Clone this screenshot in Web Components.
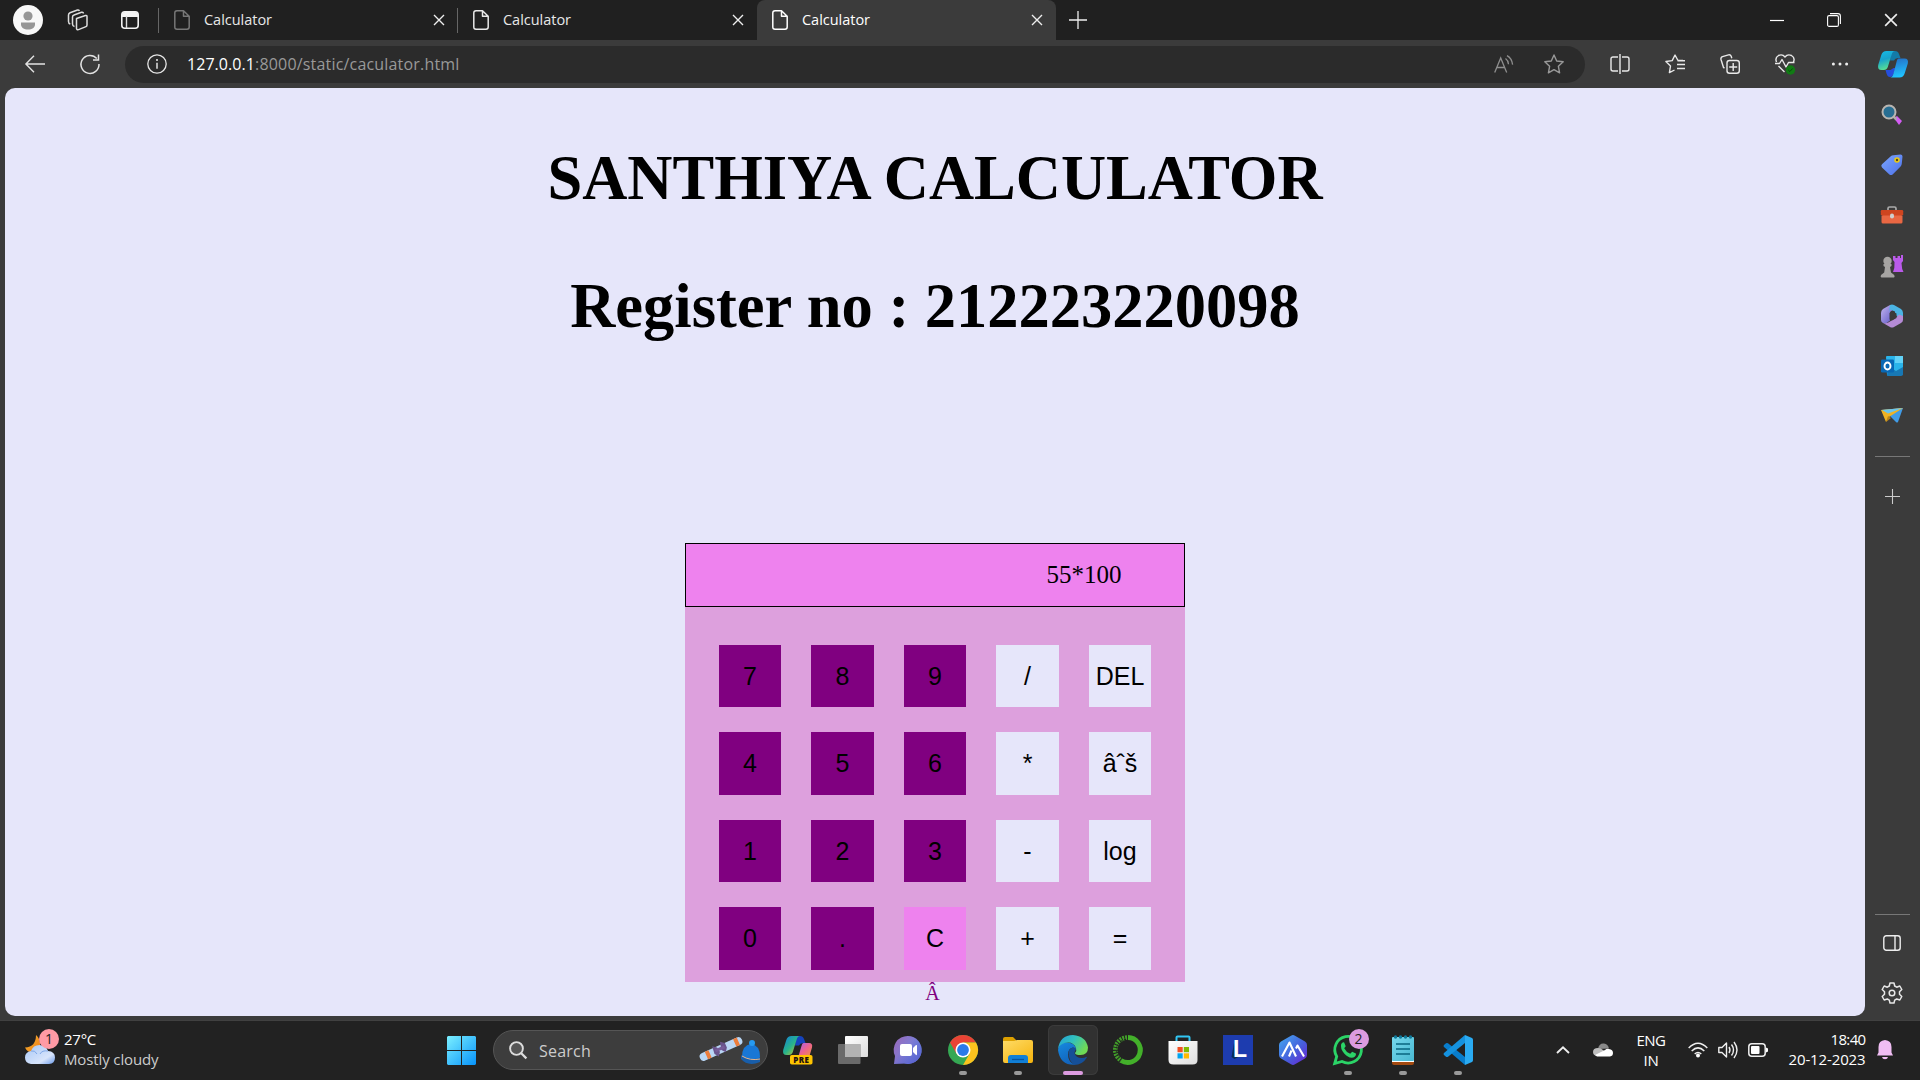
<!DOCTYPE html>
<html lang="en">
<head>
<meta charset="utf-8">
<title>Calculator</title>
<style>
html,body{margin:0;padding:0;width:1920px;height:1080px;overflow:hidden;background:#222}
body{font-family:"Open Sans","Noto Sans",sans-serif;color:#fff}
</style>
</head>
<body>
<desktop-screen></desktop-screen>
<script>
const ICONS = {
avatar:['0 0 30 30','<circle cx="15" cy="15" r="15" fill="#f8f8f8"/><circle cx="15" cy="11" r="4.6" fill="#969696"/><path d="M8 17.5h14v2c0 3-3 5-7 5s-7-2-7-5z" fill="#969696"/>'],
workspaces:['0 0 22 22','<g fill="none" stroke="#ddd" stroke-width="1.5" stroke-linejoin="round"><path d="M9.5 9.5l9-3q1.500-.3 1.500 1v8.500q0 1.200-1 1.600l-7.500 3q-1.800.5-2-1.200z"/><path d="M16.500 4.500q-.5-1.700-2-1.200L7 6q-1.500.5-1.500 2v7q0 2 2 2.500"/><path d="M12.500 1.800q-.8-1.200-2-.8L3 3.800Q1.500 4.500 1.500 6v6.500q0 2 1.800 2.500"/></g>'],
tabmenu:['0 0 18 18','<rect x=".8" y=".8" width="16.400" height="16.400" rx="3" fill="none" stroke="#f4f4f4" stroke-width="1.600"/><path d="M1 4Q1 1 4 1h10q3 0 3 3v2H1z" fill="#f4f4f4"/><path d="M5.500 5v12" stroke="#ddd" stroke-width="1.400"/>'],
file:['0 0 16 20','<path d="M3 .8h6.500l5.700 5.500V17q0 2.200-2.200 2.200H3Q.8 19.200.8 17V3Q.8.8 3 .8zM9.500 1v5.300h5.500" fill="none" stroke="currentColor" stroke-width="1.500" stroke-linejoin="round"/>'],
x:['0 0 12 12','<path d="M1 1l10 10M11 1L1 11" stroke="#eee" stroke-width="1.400"/>'],
plus:['0 0 18 18','<path d="M9 0v18M0 9h18" stroke="currentColor" stroke-width="1.300"/>'],
min:['0 0 14 14','<path d="M0 7.500h14" stroke="#fff" stroke-width="1.200"/>'],
max:['0 0 14 14','<g fill="none" stroke="#fff" stroke-width="1.100"><rect x=".6" y="2.600" width="10.800" height="10.800" rx="1.500"/><path d="M3 .6h8q2.400 0 2.400 2.400v8"/></g>'],
back:['0 0 20 18','<path d="M20 9H1M9 .8L.9 9 9 17.200" fill="none" stroke="#e3e3e3" stroke-width="1.400"/>'],
reload:['0 0 20 20','<path d="M16.800 4.500A9 9 0 1 0 19 10M18.500.5v5.500H13" fill="none" stroke="#e3e3e3" stroke-width="1.500"/>'],
info:['0 0 20 20','<circle cx="10" cy="10" r="9.200" fill="none" stroke="#e6e6e6" stroke-width="1.300"/><path d="M10 8.700v6" stroke="#eee" stroke-width="1.400"/><circle cx="10" cy="6" r="1" fill="#eee"/>'],
read:['0 0 20 18','<g fill="none" stroke="#8e8e8e" stroke-width="1.300"><path d="M.7 17.500L6.700 3l6 14.500M2.700 12.500h8M11.500 3.500q2.800 2 3 5.700M13 .7q4.800 2.500 5.600 9"/></g>'],
star:['0 0 20 20','<path d="M10 1l2.700 6 6.500.8-4.800 4.500 1.200 6.500L10 15.600l-5.600 3.200 1.200-6.500L.8 7.800 7.300 7z" fill="none" stroke="#999" stroke-width="1.400" stroke-linejoin="round"/>'],
split:['0 0 20 20','<g fill="none" stroke="#e8e8e8" stroke-width="1.400"><path d="M8 3H3Q1 3 1 5v10q0 2 2 2h5M12 3h5q2 0 2 2v10q0 2-2 2h-5M10 0v20"/></g>'],
favs:['0 0 20 20','<g fill="none" stroke="#e8e8e8" stroke-width="1.400" stroke-linejoin="round"><path d="M18 6.500h-5L10 1 7.200 6.600.9 7.500l4.600 4.500-1.100 6.600L9.500 16M12.500 6.700H20M12 10.500h8M12 14.500h8"/></g>'],
collect:['0 0 20 20','<g fill="none" stroke="#e8e8e8" stroke-width="1.400"><rect x="7" y="6.500" width="12.300" height="12.700" rx="2.500"/><path d="M13.200 9v8M9.200 13h8M4.500 14L3.500 13.500 1 5.500q-.5-2 1.500-2.800L8.500.9q2-.4 2.700 1.400l.6 2"/></g>'],
heart:['0 0 20 20','<g fill="none" stroke="#e8e8e8" stroke-width="1.400" stroke-linejoin="round"><path d="M1.500 8Q-.3 3.500 3.500 1.500 7.500-.2 10 3q2.500-3.200 6.500-1.500Q20.300 3.500 18.500 8M0 9.500h4.500L7 5.500l4 7.500 2.500-4.500h6M3.500 12l6 6"/></g><circle cx="15.500" cy="16" r="4.700" fill="#117b14"/><path d="M13.300 16l1.600 1.500 2.700-3" stroke="#064d08" fill="none"/>'],
dots:['0 0 18 4','<g fill="#eee"><circle cx="2.400" cy="2" r="1.500"/><circle cx="9" cy="2" r="1.500"/><circle cx="15.600" cy="2" r="1.500"/></g>'],
copilot:['0 0 30 27','<defs><linearGradient id="a" x2=".3" y2="1"><stop stop-color="#16bde8"/><stop offset=".5" stop-color="#18a3cc"/><stop offset="1" stop-color="#58df93"/></linearGradient><linearGradient id="b" x2=".2" y2="1"><stop stop-color="#246cc5"/><stop offset="1" stop-color="#20c2ff"/></linearGradient></defs><path d="M13 0h4q3 0 4 3l1.500 4H20q-3 0-4 2.500h-4z" fill="#137ba8"/><path d="M7.500 19h5l3-2 2 0-2 6q-1 3-3.500 3-2.500 0-3.500-3.500z" fill="#254edd"/><path d="M8.500 0H17q-2.500 0-3.500 4l-3.700 12q-1 3-4 3H3.500Q-.8 19 .2 14L3.300 4q1.200-4 5.200-4z" fill="url(#a)"/><path d="M20.500 7.500h6q4.300 0 3.300 5l-3 9.500q-1.300 4.500-5.300 4.500H12q2.500 0 3.500-4L18.500 11q.7-3.500 2-3.500z" fill="url(#b)"/>'],
sSearch:['0 0 22 22','<path d="M13 14l3-2 5 5-3 4z" fill="#d35cf3"/><path d="M12.500 12.500l3 3" stroke="#aaa" stroke-width="2.500"/><circle cx="8" cy="8" r="6.500" fill="#286e92" stroke="#b9b5b1" stroke-width="2"/>'],
sTag:['0 0 22 22','<defs><linearGradient id="t" x2="1" y2="1"><stop stop-color="#7ca7ff"/><stop offset="1" stop-color="#4d70e8"/></linearGradient></defs><path d="M12.500 1.200l7-.6q2 0 2 2l-.7 7q0 1.500-1.200 2.800l-8 8q-1.600 1.400-3.200 0L1 13.500q-1.500-1.600 0-3.200L9.500 2.400q1.200-1.100 3-1.200z" fill="url(#t)"/><circle cx="16" cy="6" r="2" fill="#594a17" stroke="#eac915" stroke-width="1.600"/>'],
sTools:['0 0 24 20','<path d="M8 5.500V3.500Q8 2 9.500 2h5Q16 2 16 3.500v2" fill="none" stroke="#aaa" stroke-width="1.700"/><rect x="1.500" y="10" width="21" height="8.500" rx="1.500" fill="#e96743"/><rect x=".8" y="5" width="22.400" height="5.500" rx="1.200" fill="#cf4520"/><rect x="10" y="8.500" width="4" height="5" rx="2" fill="#cfcfcf"/>'],
sChess:['0 0 24 24','<path d="M13 2h2.500v2h2V2H20v2h1V1h2v6l-1.500 2 .7 6 1.300 3H13l1.300-4 .2-6L13 6z" fill="#ba5bea"/><g fill="#a6a4a2"><circle cx="7.500" cy="7" r="4.200"/><path d="M3.500 10h8v2l-1.500 1 1 5.500 3.200 2.500q1 2-.2 2.500H1.500q-1.500-.5-.5-2.500L4.200 18.500 5 13l-1.500-1z"/></g>'],
s365:['0 0 22 24','<defs><linearGradient id="m" y2="1"><stop stop-color="#c4b6ef"/><stop offset="1" stop-color="#5b54c5"/></linearGradient></defs><path d="M9 1L2 5Q0 6.500 0 9v7q0 2 2 3l3 .5 4-3V8l4-3z" fill="url(#m)"/><path d="M9 1q2-1 4 0l7 4q2 1.500 2 4v6l-8-4V7.500L9 5.500 8 8z" fill="#4bb4e4"/><path d="M22 12v4q0 2-2 3l-7 4q-2 1-4 0l-7-4q4 1 7-1.500l5-3 4-4z" fill="#b58bd6"/><path d="M8.500 9L11 7l4.500 2.500v4.500L11 16.500 8.500 15.500z" fill="#3b3b3b"/>'],
sOutlook:['0 0 22 22','<path d="M5 2q0-1 1-1h15l1 1v17l-1 1H6z" fill="#2ab4ea"/><path d="M14 1h8v7h-8z" fill="#62d2f7"/><path d="M7 11l8 5 7-4v7q0 2-2 2H6z" fill="#1778b5"/><rect y="4.500" width="13" height="13" rx="1.200" fill="#0868b5"/><ellipse cx="6.500" cy="11" rx="3" ry="3.500" fill="none" stroke="#fff" stroke-width="1.900"/>'],
sSend:['0 0 22 18','<path d="M0 3L22 1l-5 14q-1 1-2 0L9 9z" fill="#419ce7"/><path d="M0 3L22 1 8 10 5 15z" fill="#f0b323"/><path d="M1 3L22 1 7 6.500z" fill="#69c5ee"/><path d="M5 15l2-6 3 2z" fill="#ba8419"/>'],
panel:['0 0 18 16','<g fill="none" stroke="#eee" stroke-width="1.400"><rect x=".8" y=".8" width="16.400" height="14.400" rx="2.500"/><path d="M12 1v14"/></g>'],
gear:['0 0 22 22','<g fill="none" stroke="#e8e8e8" stroke-width="1.500" stroke-linejoin="round"><path d="M9 1h4l.7 3 2 1.200L18.800 4l2 3.500-2.300 2.200v2.600l2.300 2.200-2 3.500-3.100-1-2 1.100L13 21H9l-.7-2.900-2-1.100-3.100 1-2-3.500 2.300-2.200V9.700L1.200 7.500l2-3.500 3.100 1.200 2-1.200z"/><circle cx="11" cy="11" r="2.800"/></g>'],
weather:['0 0 30 30','<defs><linearGradient id="w" y2="1"><stop stop-color="#a8c8f7"/><stop offset=".7" stop-color="#d7e4fb"/><stop offset="1" stop-color="#6a99e8"/></linearGradient><linearGradient id="q" y2="1"><stop stop-color="#f5b52c"/><stop offset="1" stop-color="#ed7c1b"/></linearGradient></defs><path d="M11 0q5 4 4 12L8 18Q2 17 0 12.500 11 12 11 0z" fill="url(#q)"/><path d="M6 29Q0 28 0 22.500 0 17 6 16q2-6 8.500-6T23 16q7 .5 7 6.500T24 29z" fill="url(#w)"/><path d="M6 16q4-1 6 3M23 16q-6-1-8 3" stroke="#7fa8e8" fill="none"/>'],
win:['0 0 29 29','<defs><linearGradient id="s" gradientUnits="userSpaceOnUse" x2="29" y2="29"><stop stop-color="#7cf0ff"/><stop offset="1" stop-color="#0793fb"/></linearGradient></defs><path d="M1 0h13v14H0V1zM15 0h13l1 1v13H15zM0 15h14v14H1l-1-1zM15 15h14v13l-1 1H15z" fill="url(#s)"/>'],
mag:['0 0 18 18','<circle cx="7.500" cy="7.500" r="6.400" fill="#555" stroke="#ddd" stroke-width="1.900"/><path d="M12 12l5.400 5.400" stroke="#ddd" stroke-width="2.200"/>'],
ski:['0 0 62 30','<g transform="rotate(-24 22 14)"><rect x="-1" y="10" width="46" height="8" rx="4" fill="#b9d6f5"/><path d="M6 10h4v8H6zM37 10h4v8h-4z" fill="#ec7d3c"/><path d="M15 8l4 3 1 5-3 4-3-4zM24 7l4 3v5l-3 4-3-4z" fill="#69548c"/><path d="M16 12h10v3H16z" fill="#765c99"/></g><path d="M43 22q0-12 9-13 9 1 9 13l-2 4q-7 3-13-1z" fill="#1977d5"/><circle cx="53" cy="8" r="3" fill="#269af1"/><path d="M42 20q8 6 19 3v4q-12 5-19-3z" fill="#185eaa"/><path d="M43 21q8 5 18 3" stroke="#e9b68a" fill="none"/>'],
pre:['0 0 30 30','<defs><linearGradient id="p" y2="1"><stop stop-color="#127ddd"/><stop offset=".5" stop-color="#28b48a"/><stop offset="1" stop-color="#f2c51a"/></linearGradient><linearGradient id="r" y2="1"><stop stop-color="#a560ee"/><stop offset=".5" stop-color="#ed638d"/><stop offset="1" stop-color="#f09443"/></linearGradient></defs><path d="M13 1h4q3 0 4 3l1.500 4H20q-3 0-4 2.500h-4z" fill="#1543bd"/><path d="M8.500 1H17q-2.500 0-3.500 4l-3.700 12q-1 3-4 3H3.500Q-.8 20 .2 15L3.300 5q1.200-4 5.200-4z" fill="url(#p)"/><path d="M20.500 8h5.500q4 0 3 4.500L26.500 21H15.500L18.500 11q.7-3 2-3z" fill="url(#r)"/><rect x="7" y="20" width="22.500" height="9.500" rx="1.800" fill="#ffc400"/><text x="18.200" y="27.800" font-family="Open Sans" font-weight="800" font-size="8" text-anchor="middle" letter-spacing=".3" fill="#211">PRE</text>'],
task:['0 0 30 30','<defs><linearGradient id="g" x2="1" y2="1"><stop stop-color="#fff"/><stop offset="1" stop-color="#ddd"/></linearGradient></defs><rect x="7" y="1" width="23" height="21" rx="1" fill="url(#g)"/><rect y="9" width="22.500" height="20" rx="1" fill="#777" opacity=".85"/><rect x="7" y="9" width="15.500" height="13" fill="#b3b3b3"/>'],
chat:['0 0 30 30','<defs><linearGradient id="c" x2="1" y2=".6"><stop stop-color="#9b67b8"/><stop offset="1" stop-color="#6b8ce7"/></linearGradient><linearGradient id="d" y2="1"><stop offset=".4" stop-color="#5657c9" stop-opacity="0"/><stop offset="1" stop-color="#5657c9"/></linearGradient></defs><path d="M15 1a14 14 0 1 1-4 27.500L1 29l1-8A14 14 0 0 1 15 1z" fill="url(#c)"/><path d="M15 1a14 14 0 1 1-4 27.500L1 29l1-8A14 14 0 0 1 15 1z" fill="url(#d)"/><rect x="7" y="9" width="12" height="12" rx="2" fill="#fff"/><path d="M20 13l3-3q1-.5 1 1v8q0 1.500-1 1l-3-3z" fill="#fff"/>'],
chrome:['0 0 30 30','<circle cx="15" cy="15" r="15" fill="#35a853"/><path d="M2 7.500A15 15 0 0 1 28 7.500H15L8.500 18.800z" fill="#e94335"/><path d="M28 7.500A15 15 0 0 1 15 30l6.500-11.200L15 7.500z" fill="#fcc31e"/><circle cx="15" cy="15" r="7.500" fill="#fff"/><circle cx="15" cy="15" r="5.900" fill="#2a7ae9"/>'],
folder:['0 0 30 30','<defs><linearGradient id="f" x2=".8" y2="1"><stop stop-color="#ffdc67"/><stop offset="1" stop-color="#f6b613"/></linearGradient></defs><path d="M0 4q0-2 2-2h8l3 3v6H0z" fill="#dda000"/><path d="M0 6h11l3-1h14q2 0 2 2v19q0 2-2 2H2q-2 0-2-2z" fill="url(#f)"/><path d="M5 28v-5q0-3 3-3h14q3 0 3 3v5z" fill="#117fd6"/><path d="M9 24.500h12" stroke="#0754a0" stroke-width="1.300"/>'],
edge:['0 0 30 30','<defs><linearGradient id="e" x2="1" y2=".5"><stop stop-color="#229ed8"/><stop offset=".5" stop-color="#31c0bd"/><stop offset="1" stop-color="#70db55"/></linearGradient><linearGradient id="h" x2=".4" y2="1"><stop stop-color="#1689df"/><stop offset="1" stop-color="#1264bd"/></linearGradient></defs><path d="M0 15Q1 7 9.500 7.500q8 .5 8.500 7-1-2-3-2-5 1-5 7 0 7.500 7 10.300Q2 30.500 0 15z" fill="url(#h)"/><path d="M10.500 18q0-4.500 4.500-5.500 2 0 3 2-1.500 1.500-1.500 3.500 1 5 7.500 5 2.500 0 4.500-1.200.6 0 .2 1Q24.500 30 16 30 10.500 25 10.500 18z" fill="#154f98"/><path d="M0 14Q2 0 15 0q13 1 15 12.500Q30 20 22.500 20q-5.500 0-5.500-2 2-2 1-5Q16 7.500 10 7.500 2 8 0 14z" fill="url(#e)"/>'],
anaconda:['0 0 30 30','<path d="M15 2.500a12.500 12.500 0 1 1-7 23" fill="none" stroke="#43b02a" stroke-width="5"/><path d="M14 2.500A12.500 12.500 0 0 0 8 25.500" fill="none" stroke="#43a02a" stroke-width="4.500" stroke-dasharray="1.800 1"/><path d="M13 4.500A10.500 10.500 0 0 0 6 22" fill="none" stroke="#222" stroke-width="1" stroke-dasharray="2 2"/>'],
store:['0 0 30 30','<defs><linearGradient id="z" y2="1"><stop stop-color="#fff"/><stop offset="1" stop-color="#dedede"/></linearGradient></defs><path d="M8.500 7V2.500q0-1 1-1h11q1 0 1 1V7" fill="none" stroke="#31c6f3" stroke-width="2"/><path d="M.5 6h29v19q0 4.500-5 4.500h-19q-5 0-5-4.500z" fill="url(#z)"/><path d="M9.500 12h5.200v5.200H9.500z" fill="#f25022"/><path d="M15.800 12H21v5.200h-5.200z" fill="#7fba00"/><path d="M9.500 18.300h5.200v5.200H9.500z" fill="#00a4ef"/><path d="M15.800 18.300H21v5.200h-5.200z" fill="#ffb900"/>'],
lapp:['0 0 30 30','<rect width="30" height="30" fill="#1d3caf"/><path d="M11 8L8.500 22l3 2 4-2z" fill="#092f56"/><text x="10" y="22" font-family="Liberation Sans" font-weight="700" font-size="23" fill="#fff">L</text>'],
hex:['0 0 30 30','<defs><linearGradient id="x" x2="1" y2="1"><stop stop-color="#44abf1"/><stop offset=".55" stop-color="#4660dc"/><stop offset="1" stop-color="#6b20d2"/></linearGradient></defs><path d="M13 .7q2-1.200 4 0l10 5.800q2 1.200 2 3.500v10q0 2.300-2 3.500l-10 5.800q-2 1.200-4 0L3 23.500Q1 22.300 1 20V10q0-2.300 2-3.500z" fill="url(#x)"/><path d="M4 21.500l7.500-14 6.500 14M11 21.500l2.500-6M18 13.500l1.500-3L26 21.500" fill="none" stroke="#fff" stroke-width="2.100" stroke-linejoin="round"/>'],
whats:['0 0 30 30','<path d="M1.700 28.500l2-7A13.300 13.300 0 1 1 9 26.500z" fill="#202522" stroke="#2bd467" stroke-width="2.800"/><path d="M8.200 9q1.500-2.500 3-1.500l1.500 3.700-1.500 2q2 4 6 5.500l2-2 3.700 1.800q.5 2.500-2.500 4-5 1-9.200-4Q7 13.500 8.200 9z" fill="#2bd467"/>'],
note:['0 0 22 30','<defs><linearGradient id="n" y2="1"><stop stop-color="#76d8ed"/><stop offset="1" stop-color="#49b8d1"/></linearGradient></defs><path d="M0 25h22v3q0 2-2 2H2q-2 0-2-2z" fill="#a34a10"/><path d="M0 25h22v2H0z" fill="#fff"/><rect y="2" width="22" height="24" rx="1" fill="url(#n)"/><g stroke="#086580" stroke-width="1.700"><path d="M4 9h14M4 14h14M4 19h14"/></g><g fill="#10799a"><circle cx="3.500" cy="2" r="1.700"/><circle cx="8.500" cy="2" r="1.700"/><circle cx="13.500" cy="2" r="1.700"/><circle cx="18.500" cy="2" r="1.700"/></g>'],
code:['0 0 30 30','<path d="M22 0l7 3q1 .5 1 2v20q0 1.500-1 2l-7 3z" fill="#2aabf2"/><path d="M22 30L1 12q-1-1 0-2l2-1.700q1-.8 2 0L22 22z" fill="#087dcc"/><path d="M22 0L1 18q-1 1 0 2l2 1.700q1 .8 2 0L22 8z" fill="#1592df"/>'],
chev:['0 0 14 8','<path d="M1 7l6-5.700L13 7" fill="none" stroke="#eee" stroke-width="1.900"/>'],
cloud:['0 0 20 14','<path d="M5 6q1-6 6-5.500 4 .5 5 5z" fill="#898989"/><path d="M4 13q-4-.5-4-4 0-4 5-4 3 0 5 2l7 6z" fill="#bebebe"/><path d="M2 12l10-5q2-2 4-1 4 .7 4 4 0 3-3 3.500H4z" fill="#fff"/>'],
wifi:['0 0 20 16','<g fill="none" stroke="#eee" stroke-width="1.500"><path d="M.7 6q9.300-9.500 18.600 0M3.700 9q6.300-6.200 12.600 0M6.700 12q3.300-3 6.600 0"/></g><circle cx="10" cy="13.500" r="2" fill="#fff"/>'],
sound:['0 0 20 18','<g fill="none" stroke="#eee" stroke-width="1.400" stroke-linejoin="round"><path d="M.8 6.500H4L8.500 2v14L4 11.500H.8zM11 6q2 3 0 6M13.500 3.500q4 5.500 0 11M16 1q6 8 0 16"/></g>'],
batt:['0 0 20 14','<rect x=".8" y=".8" width="16.400" height="12.400" rx="3" fill="none" stroke="#eee" stroke-width="1.500"/><rect x="3" y="3" width="8.500" height="8" rx="1" fill="#fff"/><path d="M18 4.500l2 1v3l-2 1z" fill="#fff"/>'],
bell:['0 0 16 20','<path d="M0 15.500l1.500-3V7q0-6.500 6.500-7 6.500.5 6.500 7v5.500l1.500 3z" fill="#f0bdf3"/><path d="M5 17h6q-.5 2.300-3 2.300T5 17z" fill="#f0bdf3"/>']
};

customElements.define('ui-icon', class extends HTMLElement{
  connectedCallback(){
    if(this.shadowRoot) return;
    const [box,body]=ICONS[this.getAttribute('name')];
    const [, , bw, bh]=box.split(' ');
    const w=this.getAttribute('w')||bw, h=this.getAttribute('h')||bh;
    this.attachShadow({mode:'open'}).innerHTML=
      `<style>:host{display:block;flex:none;width:${w}px;height:${h}px}svg{display:block;overflow:visible}</style><svg width="${w}" height="${h}" viewBox="${box}">${body}</svg>`;
  }
});

/* A single-line label whose tracking is adjusted to fill a given width. */
customElements.define('ui-label', class extends HTMLElement{
  connectedCallback(){
    if(this.shadowRoot) return;
    this.attachShadow({mode:'open'}).innerHTML='<style>:host{display:inline-block;white-space:pre;flex:none}</style><slot></slot>';
    const w=+this.getAttribute('w');
    if(w){
      const s=(w-this.getBoundingClientRect().width)/this.textContent.length;
      this.style.letterSpacing=s.toFixed(3)+'px';
    }
  }
});

function define(name, css, html){
  const t=document.createElement('template');
  t.innerHTML=`<style>${css}</style>${html}`;
  customElements.define(name, class extends HTMLElement{
    connectedCallback(){
      if(this.shadowRoot) return;
      this.attachShadow({mode:'open'}).appendChild(t.content.cloneNode(true));
    }
  });
}

define('browser-tab', `
:host{display:flex;align-items:center;box-sizing:border-box;width:299px;height:40px;padding:0 13px 0 15px;font-size:14.5px;position:relative;color:#e8e8e8}
:host([dim]) ui-icon.f{color:#777}
:host([rule])::before{content:"";position:absolute;left:-1px;top:8px;width:1px;height:25px;background:#666}
:host([active]){background:#3b3b3b;border-radius:8px 8px 0 0;color:#fff}
.t{flex:1;margin-left:14px;line-height:40px}`,
`<ui-icon class="f" name="file"></ui-icon><div class="t"><slot></slot></div><ui-icon name="x"></ui-icon>`);

define('tab-strip', `
:host{display:flex;align-items:center;height:40px;background:#202020}
.a{margin-left:13px}.b{margin-left:23.500px}.c{margin-left:32px}.tabs{display:flex;margin-left:20.500px}
.p{margin-left:13px;color:#eee}.ctl{display:flex;gap:43px;margin-left:auto;margin-right:22px}`,
`<ui-icon class="a" name="avatar"></ui-icon><ui-icon class="b" name="workspaces"></ui-icon><ui-icon class="c" name="tabmenu"></ui-icon>
<div class="tabs"><browser-tab dim rule><ui-label w="68">Calculator</ui-label></browser-tab><browser-tab rule><ui-label w="68">Calculator</ui-label></browser-tab><browser-tab active><ui-label w="68">Calculator</ui-label></browser-tab></div>
<ui-icon class="p" name="plus"></ui-icon>
<div class="ctl"><ui-icon name="min"></ui-icon><ui-icon name="max"></ui-icon><ui-icon name="x" w="14" h="14"></ui-icon></div>`);

define('address-bar', `
:host{display:flex;align-items:center;box-sizing:border-box;width:1460px;height:37px;border-radius:19px;background:#2b2b2b;padding:0 21px 0 22px;font-size:16px}
.u{margin-left:20px;flex:1;color:#999;display:flex;line-height:37px}.h{color:#fff}.s{margin-left:30px}`,
`<ui-icon name="info"></ui-icon><div class="u"><ui-label class="h" w="68">127.0.0.1</ui-label><ui-label w="204.500">:8000/static/caculator.html</ui-label></div><ui-icon name="read"></ui-icon><ui-icon class="s" name="star"></ui-icon>`);

define('tool-bar', `
:host{display:flex;align-items:center;height:48px;background:#3b3b3b;box-sizing:border-box}
.b{margin-left:25px}.r{margin-left:35px}address-bar{margin-left:25px}.g{display:flex;gap:35px;margin-left:24.500px}
.d{margin-left:36px}.c{margin-left:29.500px}`,
`<ui-icon class="b" name="back"></ui-icon><ui-icon class="r" name="reload"></ui-icon><address-bar></address-bar>
<div class="g"><ui-icon name="split"></ui-icon><ui-icon name="favs"></ui-icon><ui-icon name="collect"></ui-icon><ui-icon name="heart"></ui-icon></div>
<ui-icon class="d" name="dots"></ui-icon><ui-icon class="c" name="copilot"></ui-icon>`);

define('calc-key', `
:host{display:flex;align-items:center;justify-content:center;box-sizing:border-box;padding-top:.8px;background:#e6e6fa;color:#000;font:25px/29px "Liberation Sans",sans-serif;white-space:pre}
:host([num]){background:#800080}:host([clear]){background:#ee82ee}`, `<slot></slot>`);

define('calc-pad', `
:host{display:block;width:500px;height:439px;background:#dda0dd;color:#000}
.d{box-sizing:border-box;height:64px;border:1px solid #000;background:#ee82ee;font:25px/61px "Liberation Serif",serif;text-align:right;padding-right:62.500px}
.k{display:grid;grid-template:repeat(4,62.500px)/repeat(5,62.500px);column-gap:30px;row-gap:25px;padding:37.500px 0 0 33.750px}`,
`<div class="d">55*100</div><div class="k">
<calc-key num>7</calc-key><calc-key num>8</calc-key><calc-key num>9</calc-key><calc-key>/</calc-key><calc-key>DEL</calc-key>
<calc-key num>4</calc-key><calc-key num>5</calc-key><calc-key num>6</calc-key><calc-key>*</calc-key><calc-key>âˆš</calc-key>
<calc-key num>1</calc-key><calc-key num>2</calc-key><calc-key num>3</calc-key><calc-key>-</calc-key><calc-key>log</calc-key>
<calc-key num>0</calc-key><calc-key num>.</calc-key><calc-key clear>C</calc-key><calc-key>+</calc-key><calc-key>=</calc-key></div>`);

define('web-page', `
:host{display:flex;flex-direction:column;align-items:center;box-sizing:border-box;width:1860px;height:928px;border-radius:10px;background:#e6e6fa;color:#000;padding-top:26px;overflow:hidden;font-family:"Liberation Serif",serif}
h1{margin:0;font-size:62.500px;line-height:128px;white-space:pre}
calc-pad{margin-top:173px}.a{color:#800080;font-size:20px;line-height:23px;padding-right:5px}`,
`<h1>SANTHIYA CALCULATOR</h1><h1>Register no : 212223220098</h1><calc-pad></calc-pad><div class="a">Â</div>`);

define('side-bar', `
:host{display:flex;flex-direction:column;align-items:center;box-sizing:border-box;width:54px;height:932px;padding-top:2px}
.i{height:50.200px;display:flex;align-items:center}
hr{width:35px;height:1px;border:0;background:#777;margin:0}
.p{color:#ccc;margin-top:31.500px}.e{margin-top:auto}.n{margin-top:19.500px}.g{margin:31.500px 0 16px}`,
`<div class="i"><ui-icon name="sSearch"></ui-icon></div><div class="i"><ui-icon name="sTag"></ui-icon></div><div class="i"><ui-icon name="sTools"></ui-icon></div><div class="i"><ui-icon name="sChess"></ui-icon></div><div class="i"><ui-icon name="s365"></ui-icon></div><div class="i"><ui-icon name="sOutlook"></ui-icon></div><div class="i"><ui-icon name="sSend"></ui-icon></div>
<hr style="margin-top:15px"><ui-icon class="p" name="plus" w="15" h="15"></ui-icon>
<hr class="e"><ui-icon class="n" name="panel"></ui-icon><ui-icon class="g" name="gear"></ui-icon>`);

define('task-app', `
:host{display:flex;align-items:center;justify-content:center;position:relative;width:55px;height:50px}
:host([active])::before{content:"";position:absolute;inset:0 2.500px;border-radius:6px;background:#313131;box-shadow:inset 0 0 0 1px #3b3b3b}
:host([run])::after{content:"";position:absolute;bottom:0;left:23.500px;width:8px;height:4px;border-radius:2px;background:#999}
:host([active])::after{left:17.500px;width:20px;background:#dc9be0}
::slotted(ui-icon){position:relative}`, `<slot></slot>`);

define('count-badge', `
:host{position:absolute;width:20px;height:20px;border-radius:50%;font:14px/20px "Open Sans",sans-serif;text-align:center;color:#222}`, `<slot></slot>`);

define('task-bar', `
:host{display:flex;align-items:center;box-sizing:border-box;height:60px;background:#222;border-top:1px solid #414141;font-size:15px;line-height:20px;padding-bottom:1px}
.w{position:relative;margin-left:25px}.w count-badge{left:14px;top:-6px;background:#ff9aa5}
.wt{display:flex;flex-direction:column;align-items:flex-start;margin:-3px 0 0 9px;width:95px}.m{color:#ccc}
.win{margin-left:288px}
.s{display:flex;align-items:center;box-sizing:border-box;width:275px;height:40px;margin-left:17px;padding:0 6px 0 15px;border:1px solid #555;border-radius:20px;background:#3d3d3d;color:#ccc;font-size:16px}
.s ui-label{margin:2px 0 0 12px}.s ui-icon:last-child{margin-left:auto}
.apps{display:flex;margin-left:2px}
.tray{display:flex;align-items:center;margin-left:auto;margin-right:27px;width:337px}
.col{display:flex;flex-direction:column;margin-top:-1px}`,
`<div class="w"><ui-icon name="weather"></ui-icon><count-badge>1</count-badge></div>
<div class="wt"><ui-label w="32">27°C</ui-label><ui-label class="m" w="94.500">Mostly cloudy</ui-label></div>
<ui-icon class="win" name="win"></ui-icon>
<div class="s"><ui-icon name="mag"></ui-icon><ui-label w="52">Search</ui-label><ui-icon name="ski"></ui-icon></div>
<div class="apps"><task-app><ui-icon name="pre"></ui-icon></task-app><task-app><ui-icon name="task"></ui-icon></task-app><task-app><ui-icon name="chat"></ui-icon></task-app><task-app run><ui-icon name="chrome"></ui-icon></task-app><task-app run><ui-icon name="folder"></ui-icon></task-app><task-app run active><ui-icon name="edge"></ui-icon></task-app><task-app><ui-icon name="anaconda"></ui-icon></task-app><task-app><ui-icon name="store"></ui-icon></task-app><task-app><ui-icon name="lapp"></ui-icon></task-app><task-app><ui-icon name="hex"></ui-icon></task-app><task-app run><ui-icon name="whats"></ui-icon><count-badge style="left:28.500px;top:4px;background:#dc9be0">2</count-badge></task-app><task-app run><ui-icon name="note"></ui-icon></task-app><task-app run><ui-icon name="code"></ui-icon></task-app></div>
<div class="tray"><ui-icon name="chev"></ui-icon><ui-icon style="margin-left:23px" name="cloud"></ui-icon>
<div class="col" style="align-items:center;width:30px;margin-left:23px"><ui-label w="29">ENG</ui-label><ui-label w="15">IN</ui-label></div>
<ui-icon style="margin-left:22px" name="wifi"></ui-icon><ui-icon style="margin-left:10px" name="sound"></ui-icon><ui-icon style="margin-left:10px" name="batt"></ui-icon>
<div class="col" style="align-items:flex-end;margin:-3px 0 0 auto"><ui-label w="35">18:40</ui-label><ui-label w="77">20-12-2023</ui-label></div>
<ui-icon style="margin-left:11.500px" name="bell"></ui-icon></div>`);

define('desktop-screen', `
:host{display:flex;flex-direction:column;width:1920px;height:1080px;background:#3b3b3b}
.m{display:flex;height:932px;padding-left:5px}`,
`<tab-strip></tab-strip><tool-bar></tool-bar><div class="m"><web-page></web-page><side-bar></side-bar></div><task-bar></task-bar>`);
</script>
</body>
</html>
